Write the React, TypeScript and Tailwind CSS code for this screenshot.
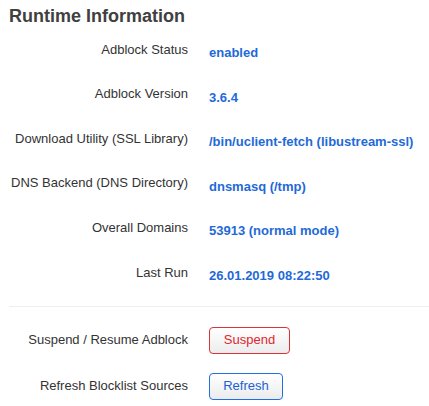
export default function App() {
  const rows: [string, string][] = [
    ["Adblock Status", "enabled"],
    ["Adblock Version", "3.6.4"],
    ["Download Utility (SSL Library)", "/bin/uclient-fetch (libustream-ssl)"],
    ["DNS Backend (DNS Directory)", "dnsmasq (/tmp)"],
    ["Overall Domains", "53913 (normal mode)"],
    ["Last Run", "26.01.2019 08:22:50"],
  ];

  return (
    <div className="w-[429px] h-[406px] bg-white pl-[9px] font-['Liberation_Sans',Arial,sans-serif] overflow-hidden">
      <h2 className="pt-[5px] text-[18px] leading-[22px] font-bold text-[#404040]">Runtime Information</h2>
      <div className="grid grid-cols-[179px_1fr] gap-x-[21px]">
        {rows.map(([label, value]) => (
          <div key={label} className="contents">
            <div className="h-[44.6px] flex items-center justify-end text-[13px] text-[#333]">{label}</div>
            <div className="h-[44.6px] flex items-center pt-[7px] text-[13px] font-bold text-[#1f6ad8]">{value}</div>
          </div>
        ))}
      </div>
      <div className="mt-[11px] h-px bg-[#eeeeee]" />
      <div className="grid grid-cols-[179px_1fr] gap-x-[21px] gap-y-[19px] mt-[20px]">
        <div className="h-[27px] flex items-center justify-end text-[13px] text-[#333]">Suspend / Resume Adblock</div>
        <div>
          <button className="h-[27px] w-[81px] rounded-[4px] border border-[#dc3238] bg-gradient-to-b from-white to-[#ececec] text-[13px] text-[#e1262d]">
            Suspend
          </button>
        </div>
        <div className="h-[27px] flex items-center justify-end text-[13px] text-[#333]">Refresh Blocklist Sources</div>
        <div>
          <button className="h-[27px] w-[74px] rounded-[4px] border border-[#1f70e6] bg-gradient-to-b from-white to-[#ececec] text-[13px] text-[#1a62d6]">
            Refresh
          </button>
        </div>
      </div>
    </div>
  );
}
